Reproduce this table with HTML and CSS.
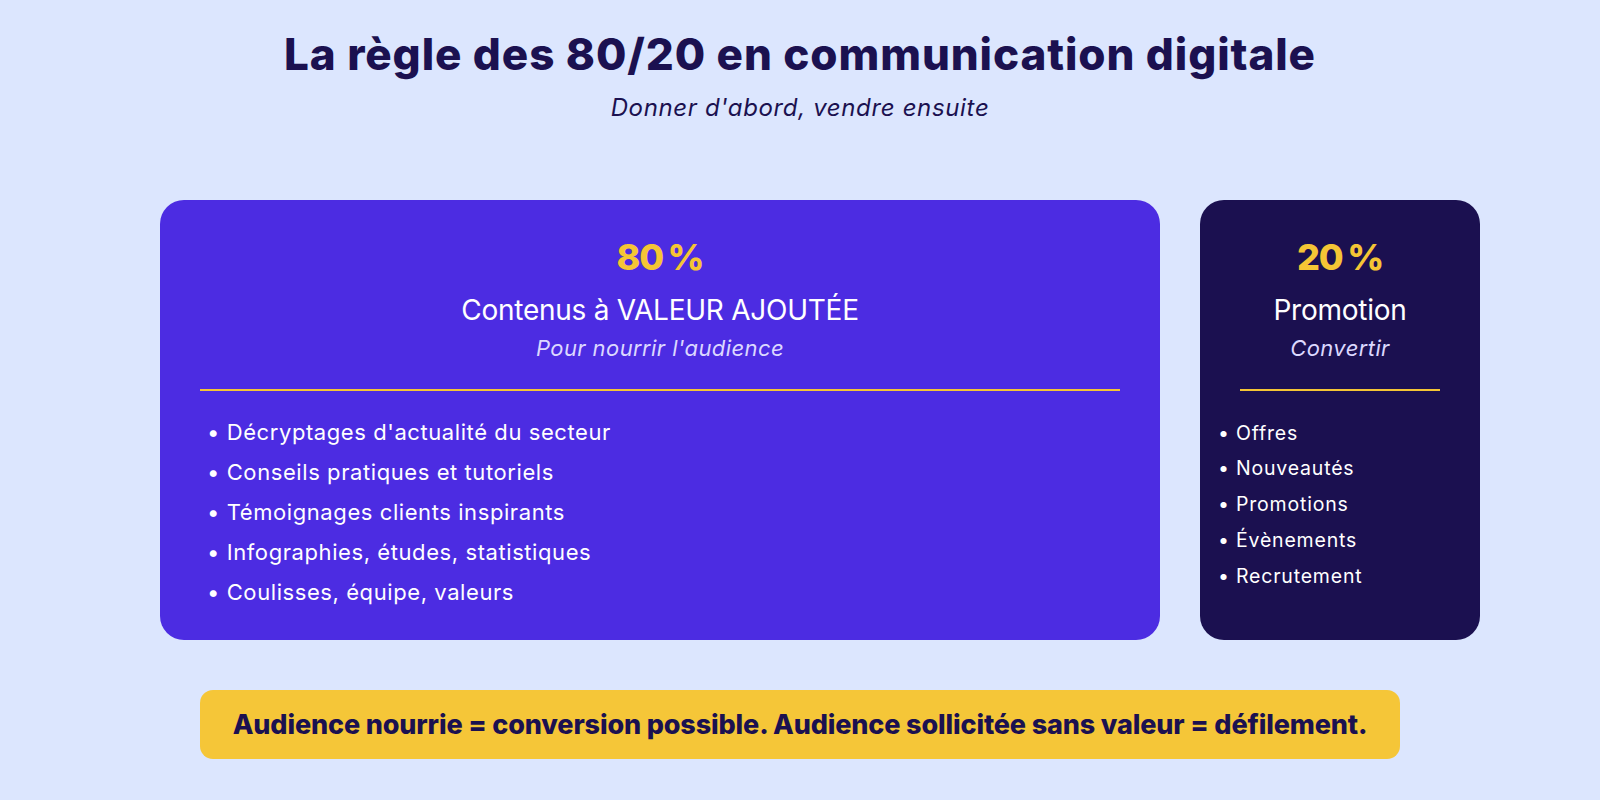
FILE: index.html
```html
<!DOCTYPE html>
<html lang="fr">
<head>
<meta charset="utf-8">
<title>La règle des 80/20</title>
<link rel="stylesheet" href="styles.css">
</head>
<body>
<main class="page">
  <header class="header">
    <h1 class="title">La règle des 80/20 en communication digitale</h1>
    <p class="subtitle">Donner d'abord, vendre ensuite</p>
  </header>
  <section class="cards">
    <article class="card card-value">
      <div class="pct">80 %</div>
      <h2 class="card-title">Contenus à VALEUR AJOUTÉE</h2>
      <p class="card-sub">Pour nourrir l'audience</p>
      <hr class="rule">
      <ul class="list list-value">
        <li>• Décryptages d'actualité du secteur</li>
        <li>• Conseils pratiques et tutoriels</li>
        <li>• Témoignages clients inspirants</li>
        <li>• Infographies, études, statistiques</li>
        <li>• Coulisses, équipe, valeurs</li>
      </ul>
    </article>
    <article class="card card-promo">
      <div class="pct">20 %</div>
      <h2 class="card-title">Promotion</h2>
      <p class="card-sub">Convertir</p>
      <hr class="rule">
      <ul class="list list-promo">
        <li>• Offres</li>
        <li>• Nouveautés</li>
        <li>• Promotions</li>
        <li>• Évènements</li>
        <li>• Recrutement</li>
      </ul>
    </article>
  </section>
  <div class="banner">Audience nourrie = conversion possible. Audience sollicitée sans valeur = défilement.</div>
</main>
</body>
</html>
```
FILE: styles.css
```css
* { box-sizing: border-box; }
html, body { margin: 0; padding: 0; }
body {
  background: #dce6fe;
  font-family: "Inter", "Open Sans", sans-serif;
  color: #1b1150;
  width: 1600px;
  height: 800px;
  overflow: hidden;
}
.page {
  display: flex;
  flex-direction: column;
}
.header {
  text-align: center;
  padding-top: 27px;
}
.title {
  margin: 0;
  font-size: 44px;
  line-height: 54px;
  font-weight: 800;
  letter-spacing: 0.9px;
  color: #1b1150;
}
.subtitle {
  margin: 11.5px 0 0;
  font-size: 24px;
  line-height: 30px;
  font-style: italic;
  letter-spacing: 0.65px;
  color: #1b1150;
}
.cards {
  margin-top: 77.5px;
  margin-left: 160px;
  display: grid;
  grid-template-columns: 1000px 280px;
  column-gap: 40px;
  height: 440px;
}
.card {
  border-radius: 24px;
  color: #ffffff;
  display: flex;
  flex-direction: column;
  padding-top: 34.5px;
}
.card-value { background: #4c2ce2; padding-left: 40px; padding-right: 40px; }
.card-promo { background: #1b1050; padding-left: 20px; padding-right: 20px; }
.pct {
  text-align: center;
  font-size: 36px;
  line-height: 44px;
  font-weight: 800;
  letter-spacing: -1.2px;
  word-spacing: -2px;
  color: #f5c535;
}
.card-title {
  margin: 14.5px 0 0;
  text-align: center;
  font-size: 28px;
  line-height: 34px;
  font-weight: 400;
  letter-spacing: -0.25px;
}
.card-sub {
  margin: 7px 0 0;
  text-align: center;
  font-size: 22px;
  line-height: 28px;
  font-style: italic;
  letter-spacing: 0.4px;
  color: #dcd8ff;
}
.rule {
  margin: 27px 0 0;
  border: 0;
  height: 2px;
  background: #f5c535;
  flex: none;
}
.card-promo .rule { margin-left: 20px; margin-right: 20px; }
.list {
  list-style: none;
  margin: 0;
  padding: 0;
}
.list-value { margin-top: 21px; padding-left: 7px; }
.list-value li { font-size: 22px; line-height: 40px; font-weight: 400; letter-spacing: 0.58px; }
.list-promo { margin-top: 24.6px; margin-left: -2px; }
.list-promo li { font-size: 19.5px; line-height: 35.8px; font-weight: 400; letter-spacing: 0.8px; }
.banner {
  margin-top: 50px;
  margin-left: 200px;
  width: 1200px;
  height: 69px;
  border-radius: 13px;
  background: #f5c638;
  color: #1b1150;
  font-size: 27px;
  font-weight: 800;
  display: flex;
  align-items: center;
  justify-content: center;
  letter-spacing: -0.15px;
}
```
